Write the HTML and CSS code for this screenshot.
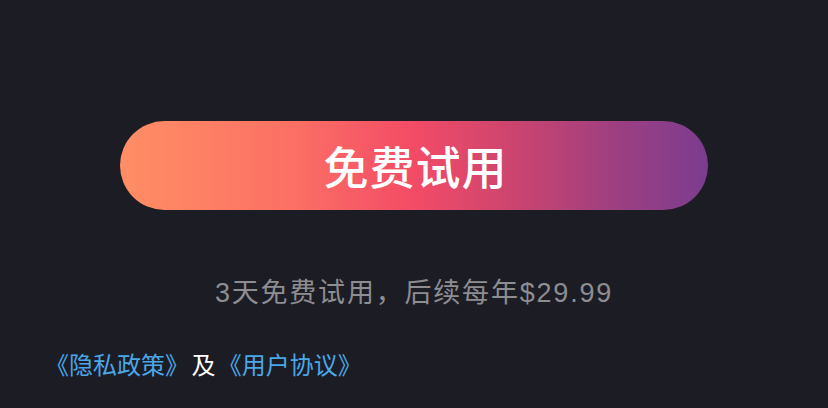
FILE: index.html
```html
<!DOCTYPE html>
<html lang="zh-CN">
<head>
    <meta charset="UTF-8">
    <meta name="viewport" content="width=device-width, initial-scale=1.0">
    <title>免费试用</title>
    <link rel="stylesheet" href="styles.css">
</head>
<body>
    <div class="page">
        <div class="trial">
            <button class="trial-btn" type="button">免费试用</button>
            <p class="trial-note">3天免费试用，后续每年$29.99</p>
        </div>
        <p class="legal">
            <a href="#">《隐私政策》</a> 及 <a href="#">《用户协议》</a>
        </p>
    </div>
</body>
</html>
```

FILE: styles.css
```css
/* Global */
body {
    margin: 0;
    padding: 0;
    background: #1c1c24;
    font-family: 'Noto Sans', 'Noto Sans CJK SC', sans-serif;
    color: #fff;
    height: 408px;
    overflow: hidden;
}

.page {
    padding: 121px 45px 0;
}

/* Trial block */
.trial {
    display: flex;
    flex-direction: column;
    align-items: center;
}

.trial-btn {
    width: 588px;
    height: 89px;
    border: none;
    border-radius: 45px;
    background: linear-gradient(90deg, #ff8e65 0%, #fb6f64 30%, #f34b66 50%, #c94470 68%, #9c3f82 85%, #7c3c8f 100%);
    color: #fff;
    font-family: 'Noto Sans CJK SC', sans-serif;
    font-size: 45px;
    font-weight: 500;
    letter-spacing: 1px;
    cursor: pointer;
    padding: 0 0 0 3px;
}

.trial-note {
    margin: 65px 0 0;
    font-family: 'Liberation Sans', 'Noto Sans CJK SC', sans-serif;
    font-size: 27px;
    letter-spacing: 1.8px;
    color: #8d8d92;
    line-height: 36px;
}

/* Legal links */
.legal {
    margin: 38px 0 0;
    font-family: 'Noto Sans CJK SC', sans-serif;
    font-size: 24px;
    line-height: 30px;
    color: #fff;
    word-spacing: -3px;
}

.legal a {
    color: #4aa7e8;
    text-decoration: none;
}
```
